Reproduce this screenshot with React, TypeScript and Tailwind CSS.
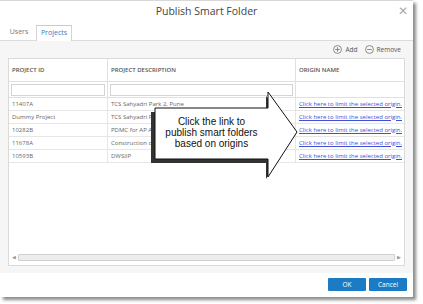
import React from "react";

const rows = [
  { id: "11407A", desc: "TCS Sahyadri Park 2, Pune" },
  { id: "Dummy Project", desc: "TCS Sahyadri Park 2, Pune" },
  { id: "10282B", desc: "PDMC for AP AMRUT" },
  { id: "11678A", desc: "Construction of Office" },
  { id: "10593B", desc: "DWSIIP" },
];

const CircleIcon = ({ plus }: { plus?: boolean }) => (
  <svg width="9" height="9" viewBox="0 0 10 10" className="shrink-0">
    <circle cx="5" cy="5" r="4.4" fill="none" stroke="#666" strokeWidth="0.8" />
    <line x1="2.4" y1="5" x2="7.6" y2="5" stroke="#666" strokeWidth="0.8" />
    {plus && <line x1="5" y1="2.4" x2="5" y2="7.6" stroke="#666" strokeWidth="0.8" />}
  </svg>
);

export default function App() {
  return (
    <div className="w-[423px] h-[304px] bg-white relative overflow-hidden font-['Open_Sans',sans-serif]">
      <div className="w-[413px] h-[297px] bg-white border-t border-[#d8d8d8] shadow-[3px_3px_3px_rgba(0,0,0,0.45)] flex flex-col">
        {/* title */}
        <div className="h-[22px] relative flex items-center justify-center text-[10.5px] text-[#444]">
          Publish Smart Folder
          <span className="absolute right-[5px] top-[4px] text-[12px] text-[#aaa] font-light leading-none">✕</span>
        </div>

        {/* tabs */}
        <div className="h-[17px] flex items-end pl-[5px] gap-[3px] text-[7px]">
          <div className="w-[28px] h-[15px] flex items-center justify-center text-[#777]">Users</div>
          <div className="w-[36px] h-[16px] flex items-center justify-center text-[#3c78c0] bg-white border border-b-0 border-[#d4d4d4] border-t-[#b9cde3] -mb-px relative">
            Projects
          </div>
        </div>

        {/* content */}
        <div className="h-[233px] bg-[#f6f6f6] border-t border-[#dcdcdc] px-[8px] flex flex-col">
          <div className="h-[17px] flex items-center justify-end gap-[7px] pr-[4px] text-[6.5px] text-[#555]">
            <span className="flex items-center gap-[3px]">
              <CircleIcon plus />
              Add
            </span>
            <span className="flex items-center gap-[3px]">
              <CircleIcon />
              Remove
            </span>
          </div>

          <div className="h-[208px] bg-white border border-[#dadada] flex flex-col">
            <div className="grid grid-cols-[99px_188px_1fr] flex-1 content-start">
              {/* header */}
              <div className="h-[23px] flex items-center pl-[3px] text-[6px] font-semibold text-[#555] border-b border-r border-[#e0e0e0]">PROJECT ID</div>
              <div className="h-[23px] flex items-center pl-[3px] text-[6px] font-semibold text-[#555] border-b border-r border-[#e0e0e0]">PROJECT DESCRIPTION</div>
              <div className="h-[23px] flex items-center pl-[3px] text-[6px] font-semibold text-[#555] border-b border-[#e0e0e0]">ORIGIN NAME</div>
              {/* filter */}
              <div className="h-[16px] flex items-center px-[2px] border-b border-r border-[#e0e0e0]">
                <div className="h-[12px] w-full border border-[#d4d4d4] bg-white" />
              </div>
              <div className="h-[16px] flex items-center px-[2px] border-b border-r border-[#e0e0e0]">
                <div className="h-[12px] w-full border border-[#d4d4d4] bg-white" />
              </div>
              <div className="h-[16px] border-b border-[#e0e0e0]" />
              {rows.map((r) => (
                <React.Fragment key={r.id}>
                  <div className="h-[13px] flex items-center pl-[3px] text-[6px] text-[#666] border-b border-r border-[#e6e6e6] whitespace-nowrap overflow-hidden">{r.id}</div>
                  <div className="h-[13px] flex items-center pl-[3px] text-[6px] text-[#666] border-b border-r border-[#e6e6e6] whitespace-nowrap overflow-hidden">{r.desc}</div>
                  <div className="h-[13px] flex items-center pl-[3px] text-[6px] text-[#3f4fd8] underline border-b border-[#e6e6e6] whitespace-nowrap overflow-hidden">Click here to limit the selected origin.</div>
                </React.Fragment>
              ))}
            </div>
            {/* horizontal scrollbar */}
            <div className="h-[9px] mb-[3px] flex items-center px-[2px] gap-[1px]">
              <span className="text-[5px] text-[#999] w-[6px] text-center">◀</span>
              <div className="flex-1 h-[7px] bg-[#ededed] border border-[#d0d0d0] rounded-[1px]" />
              <span className="text-[5px] text-[#999] w-[6px] text-center">▶</span>
            </div>
          </div>
        </div>

        {/* footer */}
        <div className="flex-1 flex items-center justify-end gap-[3px] pr-[6px] pb-[1px]">
          <button className="w-[38px] h-[13px] bg-[#1b7bc4] text-white text-[6.5px] rounded-[1px] flex items-center justify-center">OK</button>
          <button className="w-[38px] h-[13px] bg-[#1b7bc4] text-white text-[6.5px] rounded-[1px] flex items-center justify-center">Cancel</button>
        </div>
      </div>

      {/* callout arrow */}
      <div className="absolute left-[150px] top-[90px] w-[152px] h-[90px]">
        <svg width="152" height="90" viewBox="0 0 152 90" className="absolute inset-0">
          <polygon points="3,20 118,20 118,4 147,42 118,87 118,71 3,71" fill="#333" transform="translate(-2,2)" />
          <polygon points="5,18 118,18 118,2 147,42 118,87 118,69 5,69" fill="white" stroke="#111" strokeWidth="1" />
        </svg>
        <div className="absolute left-[5px] top-[26px] w-[113px] text-center text-[10px] leading-[11px] text-[#111] font-['Liberation_Sans',Arial,sans-serif]">
          Click the link to
          <br />
          publish smart folders
          <br />
          based on origins
        </div>
      </div>
    </div>
  );
}
